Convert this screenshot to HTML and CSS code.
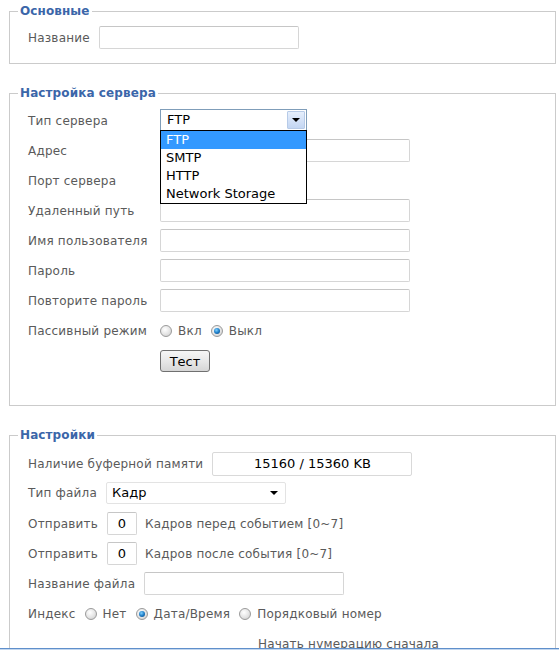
FILE: index.html
```html
<!DOCTYPE html>
<html lang="ru">
<head>
<meta charset="utf-8">
<title>Настройки загрузки</title>
<link rel="stylesheet" href="styles.css">
</head>
<body>
<div class="page">

  <fieldset class="group">
    <legend>Основные</legend>
    <div class="body body-basic">
      <div class="line">
        <label>Название</label>
        <input class="text w200" type="text">
      </div>
    </div>
  </fieldset>

  <fieldset class="group group-gap">
    <legend>Настройка сервера</legend>
    <div class="body body-server">
      <div class="form-grid">
        <label>Тип сервера</label>
        <div class="combo">
          <div class="combo-box">
            <span class="combo-value">FTP</span>
            <span class="combo-btn"><span class="tri"></span></span>
          </div>
          <ul class="combo-list">
            <li class="is-active">FTP</li>
            <li>SMTP</li>
            <li>HTTP</li>
            <li>Network Storage</li>
          </ul>
        </div>

        <label>Адрес</label>
        <input class="text w250" type="text">

        <label>Порт сервера</label>
        <input class="text w140" type="text">

        <label>Удаленный путь</label>
        <input class="text w250" type="text">

        <label>Имя пользователя</label>
        <input class="text w250" type="text">

        <label>Пароль</label>
        <input class="text w250" type="password">

        <label>Повторите пароль</label>
        <input class="text w250" type="password">

        <label>Пассивный режим</label>
        <div class="options">
          <span class="opt"><span class="radio"></span>Вкл</span>
          <span class="opt"><span class="radio is-checked"></span>Выкл</span>
        </div>

        <span></span>
        <button class="btn" type="button">Тест</button>
      </div>
    </div>
  </fieldset>

  <fieldset class="group group-gap">
    <legend>Настройки</legend>
    <div class="body body-settings">
      <div class="line">
        <label>Наличие буферной памяти</label>
        <div class="buffer">15160 / 15360 KB</div>
      </div>
      <div class="line line-select">
        <label>Тип файла</label>
        <div class="select-plain">
          <span>Кадр</span>
          <span class="tri"></span>
        </div>
      </div>
      <div class="line line-count">
        <label>Отправить</label>
        <input class="text num" type="text" value="0">
        <span class="hint">Кадров перед событием [0~7]</span>
      </div>
      <div class="line">
        <label>Отправить</label>
        <input class="text num" type="text" value="0">
        <span class="hint">Кадров после события [0~7]</span>
      </div>
      <div class="line">
        <label>Название файла</label>
        <input class="text w200" type="text">
      </div>
      <div class="line">
        <label>Индекс</label>
        <div class="options">
          <span class="opt"><span class="radio"></span>Нет</span>
          <span class="opt"><span class="radio is-checked"></span>Дата/Время</span>
          <span class="opt"><span class="radio"></span>Порядковый номер</span>
        </div>
      </div>
      <div class="line line-reset">
        <span class="reset">Начать нумерацию сначала</span>
      </div>
    </div>
  </fieldset>

</div>
<div class="frame-edge"></div>
</body>
</html>
```

FILE: styles.css
```css
html, body {
  margin: 0;
  height: 100%;
  overflow: hidden;
  background: #ffffff;
}

body {
  font-family: "DejaVu Sans", Verdana, sans-serif;
  font-size: 12px;
  letter-spacing: 0.2px;
  color: #5a5a5a;
}

.page {
  padding: 3px 0 0 9px;
}

/* ---------- groups ---------- */
.group {
  margin: 0;
  width: 547px;
  box-sizing: border-box;
  min-width: 0;
  border: 1px solid #cbcbcb;
  padding: 0 8px;
}

.group-gap {
  margin-top: 21px;
}

.group legend {
  padding: 0 2px;
  font-size: 12px;
  line-height: 16px;
  font-weight: bold;
  letter-spacing: 0.1px;
  color: #3b66a9;
}

.body {
  padding-left: 10px;
}

.body-basic {
  padding-top: 7px;
  padding-bottom: 14px;
}

.body-server {
  padding-top: 8px;
  padding-bottom: 33px;
}

.body-settings {
  padding-top: 9px;
  display: flex;
  flex-direction: column;
  gap: 7px;
}

/* ---------- generic rows ---------- */
.line {
  display: flex;
  align-items: center;
  gap: 9px;
  min-height: 23px;
}

.line-select {
  margin-top: -2px;
}

.line-count {
  margin-top: 1px;
}

.line .hint {
  margin-left: -1px;
}

label {
  white-space: nowrap;
}

/* ---------- text inputs ---------- */
.text {
  box-sizing: border-box;
  height: 23px;
  margin: 0;
  padding: 0 4px;
  border: 1px solid #d6d6d6;
  border-top-color: #c6c6c6;
  border-radius: 2px;
  background: #ffffff;
  font-family: inherit;
  font-size: 13px;
  letter-spacing: 0;
  color: #000000;
  outline: none;
}

.w200 { width: 200px; }
.w250 { width: 250px; }
.w140 { width: 140px; }

.num {
  width: 30px;
  padding: 0;
  text-align: center;
}

/* ---------- server grid ---------- */
.form-grid {
  display: grid;
  grid-template-columns: 132px auto;
  grid-auto-rows: 23px;
  row-gap: 7px;
  align-items: center;
  justify-items: start;
}

/* ---------- open combo box ---------- */
.combo {
  position: relative;
  align-self: start;
  width: 147px;
  letter-spacing: 0;
}

.combo-box {
  box-sizing: border-box;
  height: 22px;
  border: 1px solid #7f9db9;
  display: flex;
  align-items: stretch;
  background: #ffffff;
}

.combo-value {
  flex: 1;
  padding-left: 6px;
  font-size: 13px;
  line-height: 20px;
  color: #000000;
}

.combo-btn {
  width: 16px;
  margin: 1px;
  border: 1px solid #b7cbe8;
  border-radius: 1px;
  background: linear-gradient(#e6effc, #c3d6f3);
  display: flex;
  align-items: center;
  justify-content: center;
}

.tri {
  width: 0;
  height: 0;
  border-left: 4px solid transparent;
  border-right: 4px solid transparent;
  border-top: 4px solid #000000;
}

.combo-list {
  position: absolute;
  left: 0;
  top: 21px;
  z-index: 5;
  box-sizing: border-box;
  width: 147px;
  margin: 0;
  padding: 0;
  list-style: none;
  border: 1px solid #000000;
  background: #ffffff;
}

.combo-list li {
  height: 18px;
  line-height: 18px;
  padding-left: 5px;
  font-size: 13px;
  color: #000000;
}

.combo-list li.is-active {
  background: #3399ff;
  color: #ffffff;
}

/* ---------- radios ---------- */
.options {
  display: flex;
  align-items: center;
  gap: 9px;
}

.opt {
  display: inline-flex;
  align-items: center;
  gap: 6px;
}

.radio {
  position: relative;
  box-sizing: border-box;
  width: 12px;
  height: 12px;
  border-radius: 50%;
  border: 1px solid #9a9a9a;
  background: radial-gradient(circle at 40% 35%, #ffffff 0%, #e4e4e4 55%, #c8c8c8 100%);
}

.radio.is-checked::after {
  content: "";
  position: absolute;
  left: 2px;
  top: 2px;
  width: 6px;
  height: 6px;
  border-radius: 50%;
  background: radial-gradient(circle at 40% 35%, #7fd0ff 0%, #1f7fc8 50%, #0a3f78 100%);
}

/* ---------- button ---------- */
.btn {
  align-self: start;
  margin-top: 1px;
  box-sizing: border-box;
  width: 50px;
  height: 22px;
  padding: 0;
  border: 1px solid #707070;
  border-radius: 3px;
  background: linear-gradient(#f6f6f6 0%, #e8e8e8 50%, #d6d6d6 100%);
  font-family: inherit;
  font-size: 13px;
  letter-spacing: 0;
  color: #000000;
}

/* ---------- settings group ---------- */
.buffer {
  box-sizing: border-box;
  width: 200px;
  height: 24px;
  border: 1px solid #d9d9d9;
  border-radius: 2px;
  font-size: 13px;
  line-height: 22px;
  letter-spacing: 0;
  text-align: center;
  color: #000000;
}

.select-plain {
  box-sizing: border-box;
  width: 180px;
  height: 22px;
  border: 1px solid #e3e3e3;
  border-radius: 2px;
  display: flex;
  align-items: center;
  justify-content: space-between;
  padding: 0 7px 0 5px;
  font-size: 13px;
  letter-spacing: 0;
  color: #000000;
}

.line-reset {
  padding-left: 230px;
}

.reset {
  font-size: 12px;
  color: #5a5a5a;
}

/* ---------- bottom edge of the host frame ---------- */
.frame-edge {
  position: fixed;
  left: 0;
  right: 0;
  bottom: 0;
  height: 1px;
  border-top: 1px solid #5f8fcb;
  background: #c3d7ef;
  z-index: 10;
}
```
